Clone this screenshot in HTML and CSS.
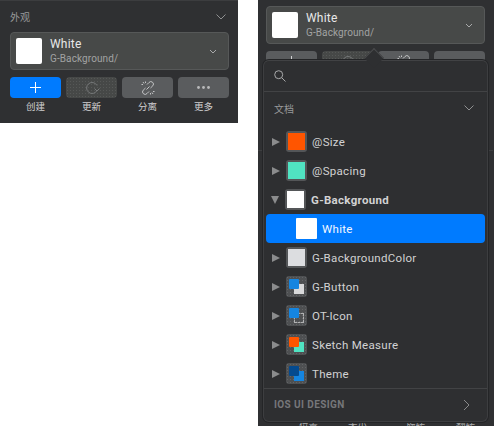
FILE: index.html
```html
<!DOCTYPE html>
<html lang="zh">
<head>
    <meta charset="UTF-8">
    <title>Shared styles</title>
    <link rel="stylesheet" href="styles.css">
</head>
<body>
    <div class="page">
        <!-- left: inspector section -->
        <section class="panel panel-left">
            <div class="section-head">
                <span>外观</span>
                <svg class="chev" width="10" height="6" viewBox="0 0 10 6"><path d="M.5 .5L5 5 9.500 .5" /></svg>
            </div>
            <div class="picker">
                <div class="picker-swatch"></div>
                <div class="picker-text">
                    <div class="picker-name">White</div>
                    <div class="picker-path">G-Background/</div>
                </div>
                <svg class="chev-small" width="8" height="5" viewBox="0 0 8 5"><path d="M1 1l3 3 3-3" /></svg>
            </div>
            <div class="actions">
                <div class="action">
                    <div class="action-btn blue">
                        <svg width="13" height="13" viewBox="0 0 13 13"><path d="M6.500 1v11M1 6.500h11" stroke="#fff" stroke-width="1" fill="none" /></svg>
                    </div>
                    <span>创建</span>
                </div>
                <div class="action">
                    <div class="action-btn off">
                        <svg width="16" height="14" viewBox="0 0 16 14"><path d="M13 9.500a5.500 5.500 0 1 1 0-5" fill="none" stroke="#77797a" stroke-width="1" /><path d="M10.500 7.500l2.500 2.500 2.500-2.500" fill="none" stroke="#77797a" stroke-width="1" /></svg>
                    </div>
                    <span>更新</span>
                </div>
                <div class="action">
                    <div class="action-btn">
                        <svg width="14" height="14" viewBox="0 0 14 14"><g fill="none" stroke="#c4c5c6" stroke-width="1"><path d="M6 3.500l2-2a2.500 2.500 0 0 1 3.800 3.300L9.500 7" /><path d="M8 10.500l-2 2a2.500 2.500 0 0 1-3.800-3.300L4.500 7" /><path d="M5.500 8.500L8.500 5.500" /><path d="M2 1l1 1.500M4.500 .5v1.500M.5 3.500h1.500M12 13l-1-1.500M9.500 13.500V12M13.500 10.500H12" /></g></svg>
                    </div>
                    <span>分离</span>
                </div>
                <div class="action">
                    <div class="action-btn">
                        <svg width="13" height="3" viewBox="0 0 13 3"><g fill="#b9babb"><circle cx="1.500" cy="1.500" r="1.400" /><circle cx="6.500" cy="1.500" r="1.400" /><circle cx="11.500" cy="1.500" r="1.400" /></g></svg>
                    </div>
                    <span>更多</span>
                </div>
            </div>
        </section>

        <!-- right: same section with the picker popover open -->
        <section class="panel panel-right">
            <div class="picker">
                <div class="picker-swatch"></div>
                <div class="picker-text">
                    <div class="picker-name">White</div>
                    <div class="picker-path">G-Background/</div>
                </div>
                <svg class="chev-small" width="8" height="5" viewBox="0 0 8 5"><path d="M1 1l3 3 3-3" /></svg>
            </div>
            <div class="actions">
                <div class="action">
                    <div class="action-btn">
                        <svg width="13" height="13" viewBox="0 0 13 13"><path d="M6.500 1v11M1 6.500h11" stroke="#d0d0d1" stroke-width="1" fill="none" /></svg>
                    </div>
                </div>
                <div class="action">
                    <div class="action-btn off">
                        <svg width="16" height="14" viewBox="0 0 16 14"><path d="M13 9.500a5.500 5.500 0 1 1 0-5" fill="none" stroke="#77797a" stroke-width="1" /></svg>
                    </div>
                </div>
                <div class="action">
                    <div class="action-btn">
                        <svg width="14" height="14" viewBox="0 0 14 14"><g fill="none" stroke="#c4c5c6" stroke-width="1"><path d="M6 3.500l2-2a2.500 2.500 0 0 1 3.800 3.300L9.500 7" /><path d="M2 1l1 1.500M4.500 .5v1.500M.5 3.500h1.500" /></g></svg>
                    </div>
                </div>
                <div class="action"><div class="action-btn"></div></div>
            </div>
            <div class="back-divider"></div>
            <div class="back-labels">
                <span>位置</span>
                <span>大小</span>
                <span>旋转</span>
                <span>翻转</span>
            </div>

            <div class="popover">
                <div class="popover-arrow"></div>
                <div class="search">
                    <svg width="12" height="12" viewBox="0 0 12 12"><g fill="none" stroke="#a9aaab" stroke-width="1"><circle cx="4.700" cy="4.700" r="4" /><path d="M7.700 7.700L11.500 11.500" /></g></svg>
                </div>
                <div class="pop-head">
                    <span>文档</span>
                    <svg class="chev" width="10" height="6" viewBox="0 0 10 6"><path d="M.5 .5L5 5 9.500 .5" /></svg>
                </div>
                <ul class="tree">
                    <li class="row">
                        <i class="tri"></i>
                        <div class="thumb"><div class="fill orange"></div></div>
                        <span>@Size</span>
                    </li>
                    <li class="row">
                        <i class="tri"></i>
                        <div class="thumb"><div class="fill mint"></div></div>
                        <span>@Spacing</span>
                    </li>
                    <li class="row open">
                        <i class="tri down"></i>
                        <div class="thumb"><div class="fill white"></div></div>
                        <span>G-Background</span>
                    </li>
                    <li class="row selected">
                        <div class="sel-swatch"></div>
                        <span>White</span>
                    </li>
                    <li class="row">
                        <i class="tri"></i>
                        <div class="thumb"><div class="fill pale"></div></div>
                        <span>G-BackgroundColor</span>
                    </li>
                    <li class="row">
                        <i class="tri"></i>
                        <div class="thumb dotted">
                            <div class="sq back" style="background:#d8d9da"></div>
                            <div class="sq front" style="background:#1585e0"></div>
                        </div>
                        <span>G-Button</span>
                    </li>
                    <li class="row">
                        <i class="tri"></i>
                        <div class="thumb dotted">
                            <div class="sq back outline"></div>
                            <div class="sq front" style="background:#1585e0"></div>
                        </div>
                        <span>OT-Icon</span>
                    </li>
                    <li class="row">
                        <i class="tri"></i>
                        <div class="thumb dotted">
                            <div class="sq back" style="background:#50e3c2"></div>
                            <div class="sq front" style="background:#ff5500"></div>
                        </div>
                        <span>Sketch Measure</span>
                    </li>
                    <li class="row">
                        <i class="tri"></i>
                        <div class="thumb dotted">
                            <div class="sq back" style="background:#1585e0"></div>
                            <div class="sq front" style="background:#044a8f"></div>
                        </div>
                        <span>Theme</span>
                    </li>
                </ul>
                <div class="pop-foot">
                    <span>IOS UI DESIGN</span>
                    <svg width="7" height="12" viewBox="0 0 7 12"><path d="M1 1l5 5-5 5" fill="none" stroke="#8a8b8c" stroke-width="1" /></svg>
                </div>
            </div>
        </section>
    </div>
</body>
</html>
```

FILE: styles.css
```css
* {
    box-sizing: border-box;
}

html, body {
    margin: 0;
    padding: 0;
    background: #fff;
}

body {
    font-family: Roboto, "Noto Sans CJK SC", sans-serif;
    color: #e4e4e5;
}

.page {
    display: flex;
    gap: 20px;
    width: 494px;
    height: 426px;
    overflow: hidden;
    align-items: flex-start;
}

.panel {
    background: #2f3032;
}

.panel-left {
    width: 238px;
    height: 123px;
    padding: 0 9px 0 10px;
    border-top: 1px solid #3c3d3f;
}

.panel-right {
    position: relative;
    width: 236px;
    height: 426px;
    overflow: hidden;
    padding: 6px 9px 0 8px;
}

.section-head {
    display: flex;
    justify-content: space-between;
    align-items: center;
    height: 31px;
    font-size: 10px;
    color: #98999a;
    padding-right: 3px;
}

.chev path {
    fill: none;
    stroke: #8f9091;
    stroke-width: 1;
}

.chev-small path {
    fill: none;
    stroke: #a9aaab;
    stroke-width: 1;
}

.picker {
    display: flex;
    align-items: center;
    height: 38px;
    padding: 0 11px 0 5px;
    background: #474948;
    border: 1px solid #565858;
    border-radius: 4px;
}

.picker-swatch {
    width: 26px;
    height: 26px;
    background: #fff;
    border-radius: 2px;
    margin-right: 8px;
}

.picker-text {
    flex: 1;
}

.picker-name {
    font-size: 12px;
    line-height: 15px;
    padding-top: 1px;
    color: #e8e8e8;
    letter-spacing: .2px;
}

.picker-path {
    font-size: 10px;
    line-height: 14px;
    color: #a2a3a3;
    letter-spacing: .1px;
}

.actions {
    display: flex;
    gap: 5px;
    margin-top: 7px;
}

.action {
    width: 51px;
    font-size: 9.500px;
    text-align: center;
    color: #cfcfd0;
}

.action span {
    display: block;
    line-height: 14px;
    margin-top: 2px;
}

.action-btn {
    display: flex;
    align-items: center;
    justify-content: center;
    height: 21px;
    border-radius: 4px;
    background: #5a5c5e;
}

.action-btn.blue {
    background: #007bff;
}

.action-btn.off {
    background: #464847;
    background-image: radial-gradient(#565857 .6px, transparent .7px);
    background-size: 3px 3px;
}

/* things under the popover, only their edges show */
.back-divider {
    margin: 78px -8px 0;
    border-top: 1px solid #3d3e40;
}

.back-labels {
    display: grid;
    grid-template-columns: 49px 58px 50px 20px;
    margin-top: 268px;
    padding-left: 33px;
    font-size: 9.500px;
    line-height: 14px;
    color: #a9aaab;
}

/* popover */
.popover {
    position: absolute;
    left: 5px;
    top: 60px;
    width: 225px;
    height: 362px;
    background: #2e2f31;
    border: 1px solid #3d3e40;
    border-top-color: #414244;
    border-radius: 6px;
    box-shadow: 0 0 0 1px #242527;
}

.popover-arrow {
    position: absolute;
    left: 103px;
    top: -10px;
    width: 14px;
    height: 14px;
    background: #2e2f31;
    border-left: 1px solid #4a4b4d;
    border-top: 1px solid #4a4b4d;
    transform: rotate(45deg);
}

.search {
    position: relative;
    display: flex;
    align-items: center;
    height: 31px;
    padding: 0 10px;
    border-bottom: 1px solid #424345;
}

.pop-head {
    display: flex;
    justify-content: space-between;
    align-items: center;
    height: 32px;
    padding: 0 13px 0 10px;
    font-size: 10px;
    color: #98999a;
}

.tree {
    list-style: none;
    margin: 3px 0 0;
    padding: 0;
}

.row {
    display: flex;
    align-items: center;
    height: 29px;
    padding-left: 8px;
    font-size: 11.500px;
    letter-spacing: .3px;
    color: #d2d2d3;
}

.row.open {
    font-weight: 700;
}

.row.selected {
    margin: 0 2px;
    padding-left: 30px;
    background: #007bff;
    border-radius: 4px;
    color: #f4f8ff;
}

.sel-swatch {
    width: 21px;
    height: 21px;
    margin-right: 5px;
    background: #fff;
    border-radius: 1px;
}

.tri {
    width: 0;
    height: 0;
    margin-right: 6px;
    border-left: 8px solid #8b8c8d;
    border-top: 4.500px solid transparent;
    border-bottom: 4.500px solid transparent;
}

.tri.down {
    border-left: 4.500px solid transparent;
    border-right: 4.500px solid transparent;
    border-top: 8px solid #8b8c8d;
    border-bottom: 0;
    margin-left: -1px;
}

.thumb {
    position: relative;
    flex: none;
    width: 21px;
    height: 21px;
    margin-right: 5px;
    padding: 2px;
    background: #545658;
    border-radius: 3px;
}

.thumb.dotted {
    background-color: #4e5052;
    background-image: radial-gradient(#626466 .6px, transparent .7px);
    background-size: 3px 3px;
}

.fill {
    width: 17px;
    height: 17px;
}

.orange { background: #ff5500; }
.mint { background: #50e3c2; }
.white { background: #fff; }
.pale { background: #dcdde0; }

.sq {
    position: absolute;
    width: 10px;
    height: 10px;
}

.sq.front {
    left: 3px;
    top: 3px;
    border-radius: 1px;
}

.sq.back {
    left: 8px;
    top: 8px;
}

.sq.outline {
    border: 1px dashed #b0b1b2;
}

.pop-foot {
    display: flex;
    justify-content: space-between;
    align-items: center;
    height: 31px;
    padding: 1px 17px 0 10px;
    border-top: 1px solid #424345;
    font-size: 10px;
    font-weight: 700;
    letter-spacing: .4px;
    color: #76777a;
}
```
